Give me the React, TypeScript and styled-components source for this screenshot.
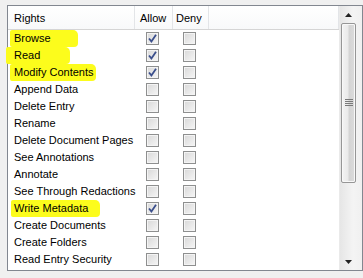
import React from "react";
import styled, { createGlobalStyle } from "styled-components";

const GlobalStyle = createGlobalStyle`
  body {
    margin: 0;
    background: #f0f0f0;
    font-family: "Liberation Sans", Arial, sans-serif;
    font-size: 11px;
    color: #000;
  }
`;

type Right = {
  label: string;
  allow: boolean;
  mark?: { left: number; width: number };
};

const rights: Right[] = [
  { label: "Browse", allow: true, mark: { left: 2, width: 68 } },
  { label: "Read", allow: true, mark: { left: -2, width: 64 } },
  { label: "Modify Contents", allow: true, mark: { left: 2, width: 86 } },
  { label: "Append Data", allow: false },
  { label: "Delete Entry", allow: false },
  { label: "Rename", allow: false },
  { label: "Delete Document Pages", allow: false },
  { label: "See Annotations", allow: false },
  { label: "Annotate", allow: false },
  { label: "See Through Redactions", allow: false },
  { label: "Write Metadata", allow: true, mark: { left: 3, width: 89 } },
  { label: "Create Documents", allow: false },
  { label: "Create Folders", allow: false },
  { label: "Read Entry Security", allow: false },
];

const Panel = styled.div`
  margin: 5px 0 0 7px;
  width: 354px;
  height: 264px;
  border: 1px solid #828790;
  background: #fff;
  display: flex;
`;

const ListArea = styled.div`
  flex: 1;
  display: flex;
  flex-direction: column;
`;

const Grid = styled.div`
  display: grid;
  grid-template-columns: 127px 38px 36px 1fr;
`;

const Header = styled(Grid)`
  height: 23px;
  border-bottom: 1px solid #d5d5d5;
  background: linear-gradient(#ffffff, #f8f9fa);
`;

const HeadCell = styled.div<{ $pad: number; $last?: boolean }>`
  display: flex;
  align-items: center;
  padding-left: ${(p) => p.$pad}px;
  border-right: ${(p) => (p.$last ? "none" : "1px solid #e3e5e8")};
`;

const Row = styled(Grid)`
  height: 17px;
  align-items: center;
`;

const NameCell = styled.div`
  position: relative;
  padding-left: 6px;
  height: 17px;
  line-height: 17px;
  white-space: nowrap;
`;

const Label = styled.span`
  position: relative;
`;

const Marker = styled.span`
  position: absolute;
  top: 0;
  height: 17px;
  background: #fcfc1c;
  border-radius: 2px 5px 4px 2px;
`;

const BoxCell = styled.div<{ $pad: number }>`
  padding-left: ${(p) => p.$pad}px;
  display: flex;
  align-items: center;
`;

const Box = styled.div`
  width: 11px;
  height: 11px;
  border: 1px solid #8e8f8f;
  background: linear-gradient(135deg, #d8d8d8, #f6f6f6);
  box-shadow: inset 0 0 0 1px #f4f4f4;
  display: flex;
  align-items: center;
  justify-content: center;
`;

const Scrollbar = styled.div`
  width: 22px;
  display: flex;
  flex-direction: column;
  background: linear-gradient(90deg, #e6e6e6, #f4f4f4 60%, #f0f0f0);
  border-left: 1px solid #eaeaea;
`;

const Arrow = styled.div`
  height: 17px;
  width: 17px;
  display: flex;
  align-items: center;
  justify-content: center;
`;

const Track = styled.div`
  flex: 1;
  padding: 0 0 0 1px;
`;

const Thumb = styled.div`
  width: 13px;
  height: 158px;
  border: 1px solid #969696;
  border-radius: 2px;
  background: linear-gradient(90deg, #f4f4f4, #eaeaea 45%, #d4d4d4 55%, #dcdcdc);
  box-shadow: inset 0 0 0 1px #f8f8f8;
  display: flex;
  align-items: center;
  justify-content: center;
`;

const Check = () => (
  <svg width="9" height="9" viewBox="0 0 9 9">
    <path d="M1 4.5 L3.4 7.4 L8 0.8" fill="none" stroke="#3b4f8c" strokeWidth="1.8" />
  </svg>
);

const CheckBox = ({ checked }: { checked: boolean }) => (
  <Box>{checked && <Check />}</Box>
);

const App = () => {
  return (
    <>
      <GlobalStyle />
      <Panel>
        <ListArea>
          <Header>
            <HeadCell $pad={6}>Rights</HeadCell>
            <HeadCell $pad={5}>Allow</HeadCell>
            <HeadCell $pad={3}>Deny</HeadCell>
            <HeadCell $pad={0} />
          </Header>
          {rights.map((r) => (
            <Row key={r.label}>
              <NameCell>
                {r.mark && (
                  <Marker style={{ left: r.mark.left, width: r.mark.width }} />
                )}
                <Label>{r.label}</Label>
              </NameCell>
              <BoxCell $pad={11}>
                <CheckBox checked={r.allow} />
              </BoxCell>
              <BoxCell $pad={10}>
                <CheckBox checked={false} />
              </BoxCell>
              <div />
            </Row>
          ))}
        </ListArea>
        <Scrollbar>
          <Arrow>
            <svg width="7" height="4" viewBox="0 0 7 4">
              <path d="M3.5 0 L7 4 L0 4 Z" fill="#222" />
            </svg>
          </Arrow>
          <Track>
            <Thumb>
              <svg width="8" height="8" viewBox="0 0 8 8">
                <path d="M0 0.5h8M0 2.5h8M0 4.5h8M0 6.5h8" stroke="#7a7a7a" strokeWidth="1" />
              </svg>
            </Thumb>
          </Track>
          <Arrow>
            <svg width="7" height="4" viewBox="0 0 7 4">
              <path d="M0 0 L7 0 L3.5 4 Z" fill="#222" />
            </svg>
          </Arrow>
        </Scrollbar>
      </Panel>
    </>
  );
};

export default App;
